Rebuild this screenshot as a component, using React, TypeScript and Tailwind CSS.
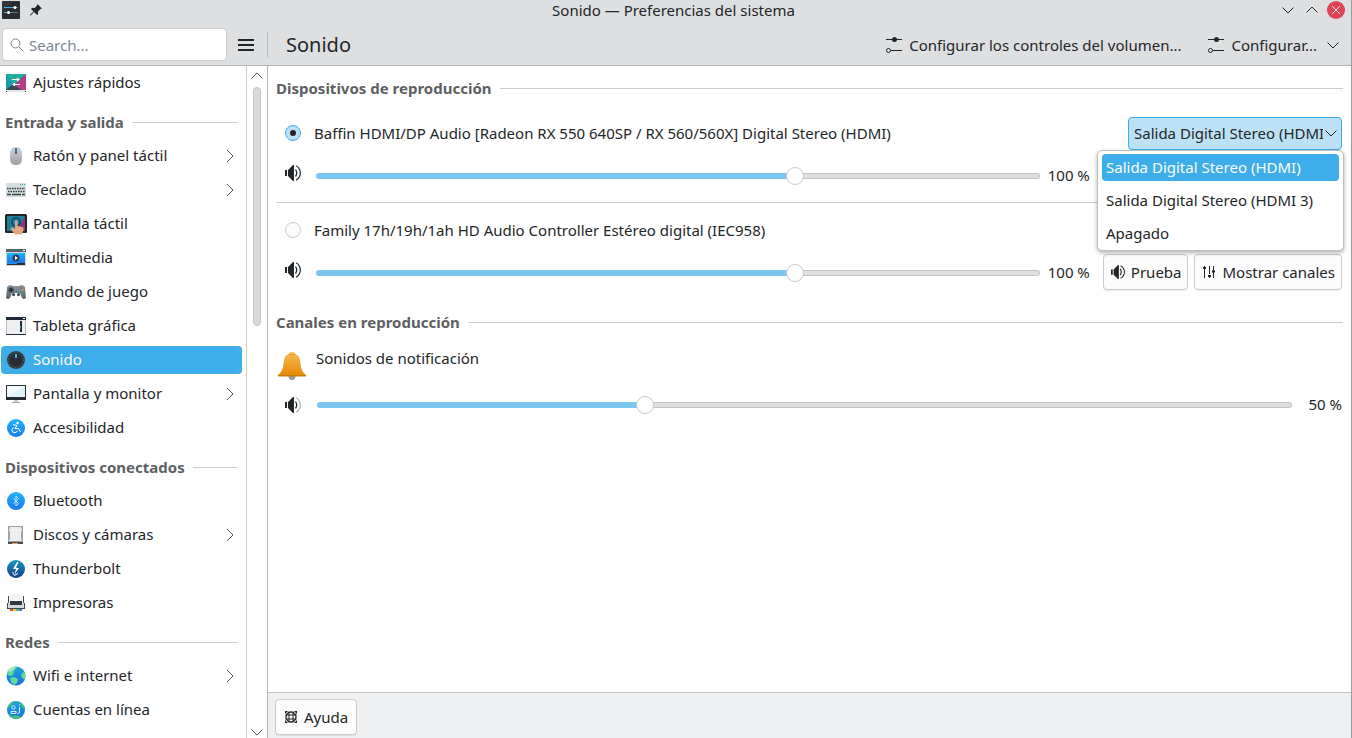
import React, { useState } from 'react';

type IconProps = { className?: string };

const Chevron: React.FC<IconProps & { dir: 'up' | 'down' | 'right' }> = ({ dir, className = '' }) => {
  const paths = { up: 'M2.5 10.5 8 5l5.5 5.5', down: 'M2.5 5.5 8 11l5.5-5.5', right: 'M5 2l6 6-6 6' };
  return (
    <svg viewBox="0 0 16 16" className={`w-4 h-4 shrink-0 ${className}`} fill="none" stroke="currentColor">
      <path d={paths[dir]} />
    </svg>
  );
};

const Speaker: React.FC<IconProps & { low?: boolean }> = ({ low, className = 'w-4 h-4' }) => (
  <svg viewBox="0 0 16 16" className={`shrink-0 ${className}`} fill="none" stroke="#232629">
    <path d="M0 5h2v6H0zM3 5l5-5h1v16H8l-5-5z" fill="#232629" stroke="none" />
    <path d="M10.5 4.5q2.400 3.500 0 7" strokeWidth="1.300" />
    <path d="M11 .8q2.500 1 3.700 4 1.200 3.200 0 6.400-1.200 3-3.700 4" strokeWidth="1.200" opacity={low ? 0.35 : 1} />
  </svg>
);

const ConfigureIcon = () => (
  <svg viewBox="0 0 18 18" className="w-[18px] h-[18px] shrink-0" fill="none" stroke="#232629">
    <path d="M1 3.500h16M6 14.500h11" />
    <circle cx="9.500" cy="3.500" r="2.500" fill="#232629" stroke="none" />
    <circle cx="3.500" cy="14.500" r="2" />
  </svg>
);

const ChannelsIcon = () => (
  <svg viewBox="0 0 14 14" className="w-3.5 h-3.5 shrink-0" fill="none" stroke="#232629">
    <path d="M2.500 1v12M7.500 1v8M7.500 11v2M11.500 1v12" />
    <path d="M1 3h3M6 11h3M10 6.500h3" strokeWidth="2" />
  </svg>
);

const HelpIcon = () => (
  <svg viewBox="0 0 14 14" className="w-3.5 h-3.5 shrink-0" fill="none" stroke="#232629">
    <circle cx="7" cy="7" r="5" strokeWidth="1.300" />
    <path d="M5 1.500v11M9 1.500v11M1.500 5h11M1.500 9h11" />
    <path d="M1 1h3L1 4zM13 1h-3l3 3zM1 13h3L1 10zM13 13h-3l3-3z" fill="#232629" stroke="none" />
  </svg>
);

const Bell = () => (
  <svg viewBox="0 0 32 32" className="w-8 h-8 shrink-0">
    <defs>
      <linearGradient id="bell" x1="0" y1="0" x2="0" y2="1">
        <stop offset="0" stopColor="#fbbb55" />
        <stop offset="1" stopColor="#e58b08" />
      </linearGradient>
    </defs>
    <path d="M12.500 26h7q0 4-3.500 4t-3.500-4z" fill="#9a9ba3" />
    <path d="M13 4q0-2 3-2t3 2q4 1 5 6l1 7q1 5 5 8H2q4-3 5-8l1-7q1-5 5-6z" fill="url(#bell)" />
    <path d="M2 25h28v1.500H2z" fill="#c98005" />
    <path d="M12.500 4.500h7" stroke="#e5982a" />
  </svg>
);

const WindowIcon = () => (
  <svg viewBox="0 0 18 18" className="w-[18px] h-[18px]">
    <rect width="18" height="18" rx="1" fill="#31363b" />
    <path d="M0 12 12 0h6v18H0z" fill="#232629" opacity=".5" />
    <path d="M2 6.500h11" stroke="#3daee9" />
    <path d="M2 11.500h4" stroke="#3daee9" />
    <path d="M7 11.500h9M14 6.500h2" stroke="#6b7175" />
    <circle cx="13" cy="6.500" r="1.500" fill="#fff" />
    <circle cx="6.500" cy="11.500" r="1.500" fill="#fff" />
  </svg>
);

const PinIcon = () => (
  <svg viewBox="0 0 12 12" className="w-3 h-3" fill="#232629">
    <path d="M7.500 0 12 4.500l-1.500.5-2.500 2.500.2 2.500L7 11 4 8 .8 11.500 0 11.200.3 10.400 3.500 7.500 1 5l1-1.200 2.800.2L7 1.500z" />
  </svg>
);

// Sidebar icons, all drawn on a 22px grid
const icons: Record<string, React.ReactNode> = {
  quick: (
    <>
      <path d="M1 2h20v16H1z" fill="#1d99b0" />
      <path d="M1 2h20L9 13z" fill="#1fae98" />
      <path d="M21 2v16h-6l-6-5z" fill="#b23f83" />
      <path d="m1 18 7-6 8 6z" fill="#36474f" />
      <path d="M1 18h20v2H1z" fill="#e3e5e7" />
      <path d="M1 19h1v1H1zM20 19h1v1h-1z" fill="#232629" />
      <path d="M7 7.500h7M8 12.500h7" stroke="#fff" />
      <path d="m12 5.500 3 2-3 2zM10 10.500l-3 2 3 2z" fill="#fff" />
    </>
  ),
  mouse: (
    <>
      <path d="M11 2q6 0 6 8v4q0 6-6 6t-6-6v-4q0-8 6-8z" fill="url(#silver)" />
      <path d="M5 11q0-7 4-8.500V9zM17 11q0-7-4-8.500V9z" fill="#c1c4c9" />
      <rect x="10" y="3" width="2" height="6" rx="1" fill="#3c4b59" />
      <path d="M11 4v3" stroke="#3daee9" />
    </>
  ),
  keyboard: (
    <>
      <path d="M1 4h20v14H1z" fill="#d8dedd" />
      <path d="M15 5.500h5" stroke="#1fae98" strokeDasharray="1 1" />
      <path d="M2 9.500h18M3 12.500h17" stroke="#31444b" strokeWidth="1.600" strokeDasharray="1.600 .9" />
      <path d="M2 15.500h4M7 15.500h9M17 15.500h3" stroke="#31444b" strokeWidth="1.600" />
    </>
  ),
  touch: (
    <>
      <rect y="1" width="22" height="19" rx="1.500" fill="#202529" />
      <path d="M2 3h18v15H2z" fill="#1f7f97" />
      <path d="M20 3v15h-8z" fill="#8e3472" />
      <circle cx="11" cy="9" r="5" fill="#164a6b" />
      <circle cx="11" cy="9" r="3" fill="#2585b5" />
      <path d="M10 8q1.500-1 2.500 0v5l5 1q1.500 1 1 3l-1.500 4.500H10L5.500 16q0-2 2-1.500L10 16z" fill="#e2a781" />
    </>
  ),
  multimedia: (
    <>
      <path d="M1 2h20v17H1z" fill="#d5d8da" />
      <path d="M1 2h20v3H1z" fill="#5a636b" />
      <path d="M18 3h2v1h-2z" fill="#fff" />
      <path d="M2 6h18v10H2z" fill="url(#blue)" />
      <path d="M2 16h18v2H2z" fill="#232b38" />
      <path d="M2 16h10v1H2z" fill="#1d99f3" />
      <circle cx="11" cy="11" r="3.500" fill="#2b3e50" />
      <path d="m10 9 3 2-3 2z" fill="#fff" />
    </>
  ),
  gamepad: (
    <>
      <path d="M2 6q1-2 4-2l2 1h6l2-1q3 0 4 2l1 11q-2 2-4 0l-2-5H7l-2 5q-2 2-4 0z" fill="url(#steel)" />
      <circle cx="6" cy="9" r="3" fill="#59646d" />
      <path d="M6 7v4M4 9h4" stroke="#1f272e" strokeWidth="1.300" />
      <circle cx="16" cy="7" r="1" fill="#da4453" />
      <circle cx="14.500" cy="9" r="1" fill="#3daee9" />
      <circle cx="17.500" cy="9" r="1" fill="#e89a49" />
      <circle cx="16" cy="11" r="1" fill="#27ae60" />
      <circle cx="8.500" cy="13.500" r="1.500" fill="#333d45" />
      <circle cx="13.500" cy="13.500" r="1.500" fill="#333d45" />
    </>
  ),
  tablet: (
    <>
      <path d="M1 2h20v18H1z" fill="#edeff0" />
      <path d="M1 2h20v3H1zM1 19h20v1H1z" fill="#202935" />
      <path d="M1.500 5v14M20.500 5v14" stroke="#bec1c3" />
      <path d="M18 3h2v1h-2z" fill="#fff" />
      <path d="M15 6h2v11h-2z" fill="#202935" />
      <path d="M15 11h1v3h-1z" fill="#1f8fc2" />
    </>
  ),
  knob: (
    <>
      <circle cx="11" cy="11" r="9" fill="#31383e" />
      <circle cx="11" cy="11" r="7.500" fill="none" stroke="#616a71" strokeDasharray="1 2" />
      <circle cx="11" cy="11" r="6" fill="#272d32" />
      <path d="M10 5h2v4h-2z" fill="#3daee9" />
    </>
  ),
  monitor: (
    <>
      <path d="M1 2h20v15H1z" fill="#262c31" />
      <path d="M2 3h18v11H2z" fill="#dff1fb" />
      <path d="M2 3h18L2 14z" fill="#f4fafc" />
      <path d="M9 17h4v2H9z" fill="#c9cccf" />
      <path d="M7 19h8v1H7z" fill="#a2a6aa" />
    </>
  ),
  access: (
    <>
      <circle cx="11" cy="11" r="9" fill="url(#blue)" />
      <circle cx="12.500" cy="6" r="1.200" fill="#fff" />
      <path d="m8 7.500 4 1-2 3h3.500l2 3.500M8.500 10.500q-3 2-1 4.500 3 2 5-1" fill="none" stroke="#fff" />
    </>
  ),
  bluetooth: (
    <>
      <circle cx="11" cy="11" r="9" fill="url(#blue)" />
      <path d="m8.500 8.500 5 5-2.500 2.500v-10l2.500 2.500-5 5" fill="none" stroke="#b9e4ff" />
    </>
  ),
  disk: (
    <>
      <path d="M3 2h15v18H3z" fill="#9ea1a5" />
      <path d="M5 3h11l1 3-1 2v6l1 3H4l1-3V8L4 6z" fill="#eceef0" />
      <path d="M3 18h15v2H3z" fill="#4a4e52" />
      <path d="M7 19h6v1H7z" fill="#f0a65b" />
    </>
  ),
  thunderbolt: (
    <>
      <circle cx="11" cy="11" r="9" fill="url(#deep)" />
      <path d="m12 4-4 7h3l-1.500 5.500L14 10h-3l2.500-6z" fill="#fff" />
      <path d="m7.500 14 2 3.500 3.500-2" fill="none" stroke="#fff" />
    </>
  ),
  printer: (
    <>
      <path d="M5 2h12v10H5z" fill="#f0f1f2" />
      <path d="M3 4h1v8H3zM18 4h1v8h-1z" fill="#42474d" />
      <path d="M2 11h18v5H2z" fill="#d3d6d8" />
      <path d="M5 9h12v4H5z" fill="#2f3943" />
      <path d="M2 11h1v6H2zM19 11h1v6h-1zM3 16h16v1H3z" fill="#42474d" />
      <path d="M5 17h3v2H5z" fill="#e64c3c" />
      <path d="M8 17h3v2H8z" fill="#e9c13b" />
      <path d="M11 17h3v2h-3z" fill="#2ecc71" />
      <path d="M14 17h3v2h-3z" fill="#7b5bd6" />
    </>
  ),
  globe: (
    <>
      <circle cx="11" cy="11" r="9.500" fill="url(#deepblue)" />
      <path d="M2 8q2-6 8-6.500 3 0 1 2L9 6l-1 4-3 1-2.500-1zM5 13l4-1 4 2-1 4-3 2-3-3zM17 8l3-1q1 4-.5 8L17 13l-1-2z" fill="#62d995" />
      <path d="M3 6q2-4 8-4.500L9 4 5 7z" fill="#a5edc4" />
    </>
  ),
  accounts: (
    <>
      <circle cx="11" cy="11" r="9" fill="url(#deepblue)" />
      <path d="M3 7q2-4 6-5L7 6 3 9zM14 2.500q5 2 6 7l-3-1zM3 14l4 3 5-1 4 2q-5 4-10 0z" fill="#3fbf7c" />
      <circle cx="8.500" cy="8.500" r="1.700" fill="none" stroke="#d2f2ff" />
      <path d="M6 14.500v-2h5v2zM14.500 8v5q0 2-2 1.500" fill="none" stroke="#d2f2ff" />
      <path d="M14 5.500h1v1h-1z" fill="#fff" />
    </>
  ),
};

const IconGradients = () => (
  <svg className="absolute w-0 h-0" aria-hidden="true">
    <defs>
      <linearGradient id="silver" x1="0" y1="0" x2="0" y2="1"><stop stopColor="#d2d4d8" /><stop offset="1" stopColor="#9c9fa6" /></linearGradient>
      <linearGradient id="blue" x1="0" y1="0" x2="0" y2="1"><stop stopColor="#20b5fa" /><stop offset="1" stopColor="#1d78ee" /></linearGradient>
      <linearGradient id="steel" x1="0" y1="0" x2="0" y2="1"><stop stopColor="#8e979f" /><stop offset="1" stopColor="#58626b" /></linearGradient>
      <linearGradient id="deep" x1="0" y1="0" x2="0" y2="1"><stop stopColor="#1a97c4" /><stop offset="1" stopColor="#123f85" /></linearGradient>
      <linearGradient id="deepblue" x1="0" y1="0" x2="0" y2="1"><stop stopColor="#1ca5d6" /><stop offset="1" stopColor="#1b6fe0" /></linearGradient>
    </defs>
  </svg>
);

const groups = [
  { title: '', items: [{ label: 'Ajustes rápidos', icon: 'quick' }] },
  {
    title: 'Entrada y salida',
    items: [
      { label: 'Ratón y panel táctil', icon: 'mouse', more: true },
      { label: 'Teclado', icon: 'keyboard', more: true },
      { label: 'Pantalla táctil', icon: 'touch' },
      { label: 'Multimedia', icon: 'multimedia' },
      { label: 'Mando de juego', icon: 'gamepad' },
      { label: 'Tableta gráfica', icon: 'tablet' },
      { label: 'Sonido', icon: 'knob', active: true },
      { label: 'Pantalla y monitor', icon: 'monitor', more: true },
      { label: 'Accesibilidad', icon: 'access' },
    ],
  },
  {
    title: 'Dispositivos conectados',
    items: [
      { label: 'Bluetooth', icon: 'bluetooth' },
      { label: 'Discos y cámaras', icon: 'disk', more: true },
      { label: 'Thunderbolt', icon: 'thunderbolt' },
      { label: 'Impresoras', icon: 'printer' },
    ],
  },
  {
    title: 'Redes',
    items: [
      { label: 'Wifi e internet', icon: 'globe', more: true },
      { label: 'Cuentas en línea', icon: 'accounts' },
    ],
  },
] as { title: string; items: { label: string; icon: string; more?: boolean; active?: boolean }[] }[];

const profiles = ['Salida Digital Stereo (HDMI)', 'Salida Digital Stereo (HDMI 3)', 'Apagado'];

const SectionTitle: React.FC<{ children: React.ReactNode }> = ({ children }) => (
  <h2 className="flex items-center gap-2 h-[22px] font-bold text-[#5d5f62] whitespace-nowrap">
    {children}
    <span className="flex-1 h-px bg-[#cbccce]" />
  </h2>
);

const VolumeSlider: React.FC<{ label: string; initial: number }> = ({ label, initial }) => {
  const [value, setValue] = useState(initial);
  return (
    <>
      <input
        type="range"
        aria-label={label}
        min={0}
        max={150}
        value={value}
        onChange={(e) => setValue(Number(e.target.value))}
        style={{ '--fill': `${(value / 150) * 100}%` } as React.CSSProperties}
        className="flex-1 min-w-0 h-[18px] appearance-none bg-transparent [&::-webkit-slider-runnable-track]:h-1.5 [&::-webkit-slider-runnable-track]:rounded-full [&::-webkit-slider-runnable-track]:border [&::-webkit-slider-runnable-track]:border-transparent [&::-webkit-slider-runnable-track]:[background:linear-gradient(90deg,#7ac6ef_var(--fill),#dfdfdf_var(--fill))_padding-box,linear-gradient(90deg,#7ac6ef_var(--fill),#c4c5c6_var(--fill))_border-box] [&::-webkit-slider-thumb]:appearance-none [&::-webkit-slider-thumb]:w-[18px] [&::-webkit-slider-thumb]:h-[18px] [&::-webkit-slider-thumb]:-mt-[7px] [&::-webkit-slider-thumb]:rounded-full [&::-webkit-slider-thumb]:bg-white [&::-webkit-slider-thumb]:border [&::-webkit-slider-thumb]:border-[#c7c8c9]"
      />
      <output className="shrink-0 pb-0.5 whitespace-nowrap">{value} %</output>
    </>
  );
};

const buttonClass = 'flex items-center justify-center gap-1.5 h-9 rounded-[4px] border border-[#cacbcc] bg-[#fcfcfc] shadow-[0_1px_1px_rgba(0,0,0,0.08)] whitespace-nowrap';

type DeviceProps = { name: string; checked?: boolean; menuOpen?: boolean; children?: React.ReactNode };

const Device: React.FC<DeviceProps> = ({ name, checked, menuOpen, children }) => (
  <div>
    <div className="flex items-center justify-between h-[33px]">
      <label className="flex items-center gap-[13px] pl-[9px] pb-0.5">
        <input
          type="radio"
          name="device"
          defaultChecked={checked}
          className="appearance-none grid place-items-center w-4 h-4 rounded-full border border-[#cacbcc] bg-[#fcfcfc] checked:border-[#3daee9] checked:bg-[#bce1f5] checked:before:w-1.5 checked:before:h-1.5 checked:before:rounded-full checked:before:bg-[#232629]"
        />
        {name}
      </label>
      {children}
    </div>
    <div className="flex items-center mt-[7px] pl-[9px]">
      <button aria-label="Silenciar" className="pb-1 mr-[15px]"><Speaker /></button>
      <div className="flex flex-1 items-center gap-2 pt-0.5">
        <VolumeSlider label={name} initial={100} />
      </div>
      {/* the open profile menu drops over these two */}
      <div className={`flex gap-1.5 ml-[13px] mr-px ${menuOpen ? 'invisible' : ''}`}>
        <button className={`${buttonClass} pl-[7px] pr-1.5`}><Speaker className="w-3.5 h-3.5" />Prueba</button>
        <button className={`${buttonClass} pl-[7px] pr-1.5`}><ChannelsIcon />Mostrar canales</button>
      </div>
    </div>
  </div>
);

const App: React.FC = () => {
  const [profile, setProfile] = useState(profiles[0]);

  return (
    <div className="flex flex-col h-screen overflow-hidden border-r border-[#9b9c9e] bg-white text-[15px] leading-[22px] text-[#232629] font-['Noto_Sans',sans-serif]">
      <IconGradients />

      {/* Title bar */}
      <header className="shrink-0 bg-[#dedfe1] border-b border-[#b3b4b9]">
        <div className="grid grid-cols-3 items-center h-6 pl-0.5 pr-1.5 pb-1">
          <div className="flex items-center gap-2.5">
            <WindowIcon />
            <button aria-label="Fijar"><PinIcon /></button>
          </div>
          <h1 className="text-center leading-5 whitespace-nowrap">Sonido — Preferencias del sistema</h1>
          <div className="flex items-center justify-end gap-1.5">
            <button aria-label="Minimizar" className="flex justify-center w-[18px]"><Chevron dir="down" /></button>
            <button aria-label="Maximizar" className="flex justify-center w-[18px]"><Chevron dir="up" /></button>
            <button aria-label="Cerrar" className="flex items-center justify-center w-[18px] h-[18px] rounded-full bg-[#dd4455]">
              <svg viewBox="0 0 10 10" className="w-2.5 h-2.5" stroke="#f4dfe1"><path d="m1 1 8 8M9 1 1 9" /></svg>
            </button>
          </div>
        </div>

        <div className="flex items-center h-[41px]">
          <div className="flex items-center w-[267px] shrink-0 pl-0.5">
            <label className="flex items-center gap-[5px] w-[225px] h-[33px] px-[7px] rounded-[4px] border border-[#cbccce] bg-white">
              <svg viewBox="0 0 14 14" className="w-3.5 h-3.5 shrink-0" fill="none" stroke="#7b8794">
                <circle cx="5.500" cy="5.500" r="4.500" /><path d="m8.500 8.500 5 5" />
              </svg>
              <input type="search" aria-label="Buscar" placeholder="Search..." className="w-full min-w-0 outline-none placeholder:text-[#7b8794]" />
            </label>
            <button aria-label="Menú" className="flex flex-col gap-[3px] w-4 ml-[11px]">
              <span className="w-full h-0.5 bg-[#232629]" />
              <span className="w-full h-0.5 bg-[#232629]" />
              <span className="w-full h-0.5 bg-[#232629]" />
            </button>
          </div>
          <span className="w-px h-[26px] bg-[#bdbec2]" />
          <span className="flex-1 pl-[18px] text-xl">Sonido</span>
          <button className="flex items-center gap-1.5 whitespace-nowrap"><ConfigureIcon />Configurar los controles del volumen...</button>
          <button className="flex items-center gap-1.5 ml-[26px] mr-2.5 whitespace-nowrap">
            <ConfigureIcon />Configurar...<Chevron dir="down" className="ml-0.5" />
          </button>
        </div>
      </header>

      <div className="flex flex-1 min-h-0">
        <aside className="flex w-[268px] shrink-0 border-r border-[#b3b4b9]">
          <nav className="flex-1 overflow-hidden border-r border-[#cbccce]">
            {groups.map((group) => (
              <div key={group.title}>
                {group.title && (
                  <div className="pt-[11px] pb-1.5 pl-[5px] pr-2">
                    <SectionTitle>{group.title}</SectionTitle>
                  </div>
                )}
                {group.items.map((item) => (
                  <div key={item.label} className="py-[3px] pl-px pr-1">
                    <a
                      href="#"
                      className={`flex items-center gap-1.5 h-7 px-1 rounded-[4px] ${item.active ? 'bg-[#3daee9] text-[#fcfcfc]' : ''}`}
                    >
                      <svg viewBox="0 0 22 22" className="w-[22px] h-[22px] shrink-0">{icons[item.icon]}</svg>
                      <span className="flex-1 pb-0.5">{item.label}</span>
                      {item.more && <Chevron dir="right" className="text-[#55585b]" />}
                    </a>
                  </div>
                ))}
              </div>
            ))}
          </nav>
          <div className="flex flex-col items-center w-5 text-[#55585b]">
            <Chevron dir="up" className="my-0.5" />
            <div className="flex-1 w-2 my-px">
              <div className="h-3/8 rounded-full border border-[#c4c5c6] bg-[#d9dada]" />
            </div>
            <Chevron dir="down" className="-mb-0.5" />
          </div>
        </aside>

        <main className="flex flex-col flex-1 min-w-0">
          <div className="flex-1 px-2 pt-[11px]">
            <SectionTitle>Dispositivos de reproducción</SectionTitle>

            <div className="mt-[18px] pb-[9px] border-b border-[#cbccce]">
              <Device name="Baffin HDMI/DP Audio [Radeon RX 550 640SP / RX 560/560X] Digital Stereo (HDMI)" checked menuOpen>
                <div className="relative mr-px">
                  <select
                    aria-label="Perfil"
                    value={profile}
                    onChange={(e) => setProfile(e.target.value)}
                    className="block appearance-none w-[214px] h-[33px] pl-[5px] pr-[18px] pb-px rounded-[4px] border border-[#3daee9] bg-[#bce1f5] outline-none"
                  >
                    {profiles.map((p) => <option key={p}>{p}</option>)}
                  </select>
                  <Chevron dir="down" className="absolute right-[3px] top-2 pointer-events-none" />

                  <ul
                    role="listbox"
                    aria-label="Perfiles"
                    className="absolute z-10 top-[33px] -right-0.5 w-[247px] px-1 py-[3px] space-y-1.5 rounded-[5px] border border-[#bdbebf] bg-white shadow-[0_2px_4px_rgba(0,0,0,0.3)]"
                  >
                    {profiles.map((p) => (
                      <li
                        key={p}
                        role="option"
                        aria-selected={p === profile}
                        onClick={() => setProfile(p)}
                        className={`flex items-center h-[27px] px-1 pb-px rounded-[4px] whitespace-nowrap ${p === profile ? 'bg-[#3daee9] text-[#fcfcfc]' : ''}`}
                      >
                        {p}
                      </li>
                    ))}
                  </ul>
                </div>
              </Device>
            </div>
            <div className="mt-[11px] mb-[21px]">
              <Device name="Family 17h/19h/1ah HD Audio Controller Estéreo digital (IEC958)" />
            </div>

            <SectionTitle>Canales en reproducción</SectionTitle>
            <div className="flex gap-2 mt-3.5">
              <div className="pt-[3px]"><Bell /></div>
              <span>Sonidos de notificación</span>
            </div>
            <div className="flex items-center h-[22px] mt-3 pl-[9px] pr-px">
              <button aria-label="Silenciar" className="mr-4"><Speaker low /></button>
              <div className="flex flex-1 items-center gap-4">
                <VolumeSlider label="Sonidos de notificación" initial={50} />
              </div>
            </div>
          </div>

          <footer className="shrink-0 pt-1.5 pb-[3px] px-[7px] bg-[#eff0f1] border-t border-[#c0c2c4]">
            <button className={`${buttonClass} px-2`}><HelpIcon />Ayuda</button>
          </footer>
        </main>
      </div>
    </div>
  );
};

export default App;
